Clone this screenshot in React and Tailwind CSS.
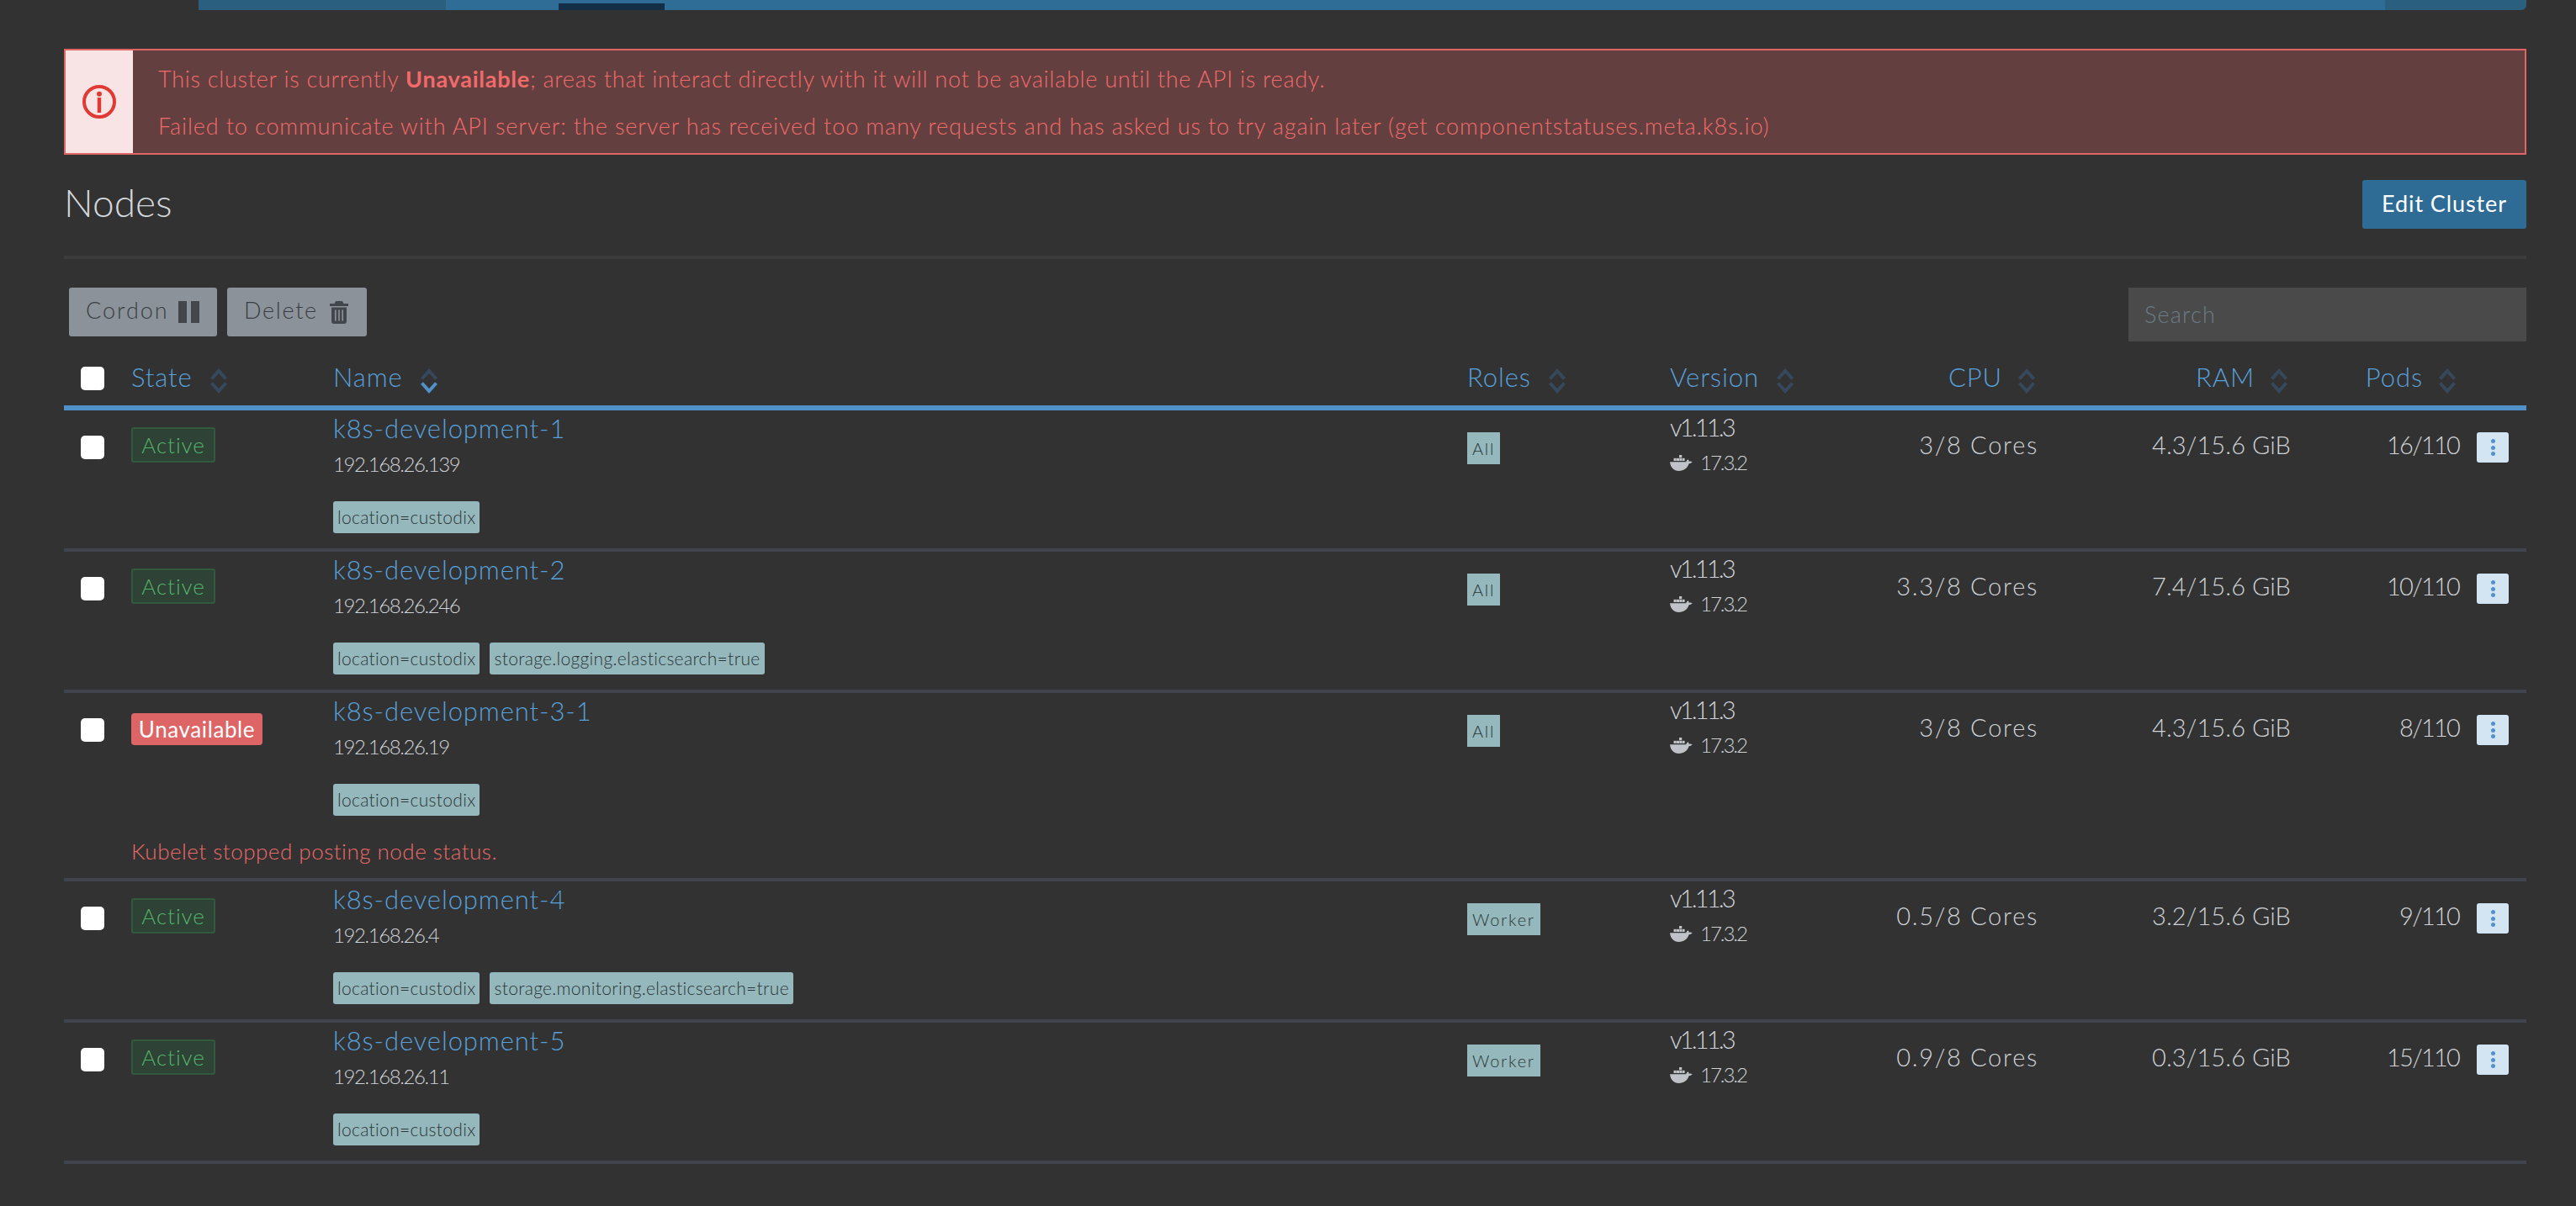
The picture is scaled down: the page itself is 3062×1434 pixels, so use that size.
import React from "react";

const GRID = "grid grid-cols-[80px_240px_1348px_241px_200px_238px_300px_200px_80px]";
const F = "font-['Lato','Open_Sans',sans-serif] font-light";

function Sort({ active }) {
  return (
    <svg width="20" height="30" viewBox="0 0 20 30" fill="none" strokeWidth="4" className="mt-[10px] shrink-0">
      <polyline points="1.5,12.5 10,3 18.5,12.5" stroke="#36495c" />
      <polyline points="1.5,17.5 10,27 18.5,17.5" stroke={active ? "#4f91c8" : "#36495c"} />
    </svg>
  );
}

function Head({ label, active, right }) {
  return (
    <div className={`flex items-center ${right ? "justify-end gap-[19px] pr-[4px]" : "gap-[21px]"}`}>
      <span className="text-[31px] leading-[40px] tracking-[0.9px] text-[#58a0da]">{label}</span>
      <Sort active={active} />
    </div>
  );
}

function Docker() {
  return (
    <svg width="27" height="19" viewBox="0 0 27 19" fill="#bfc3c7" className="shrink-0">
      <rect x="11" y="0" width="3.2" height="3.2" />
      <rect x="4.5" y="3.8" width="3.2" height="3.2" />
      <rect x="8" y="3.8" width="3" height="3.2" />
      <rect x="11.3" y="3.8" width="3" height="3.2" />
      <rect x="14.6" y="3.8" width="3" height="3.2" />
      <path d="M0 8.2h19.2c.4-1.6 1.4-2.6 2.4-3 .6.7 1 1.6 1 2.5 1.4-.5 2.9-.2 4 .6-.9 1.2-2.3 1.9-4 1.9C21 15 16.8 19 10.6 19 4.6 19 .6 14.6 0 8.2z" />
    </svg>
  );
}

function Row({ name, ip, tags, roles, cpu, ram, pods, state, error }) {
  return (
    <div className="border-b-[4px] border-[#3f444d]">
      <div className={`${GRID} h-[164px]`}>
        <div className="pl-[20px] pt-[30px]">
          <input type="checkbox" className="block h-[28px] w-[28px] appearance-none rounded-[5px] bg-white" />
        </div>
        <div>
          {state === "Active" ? (
            <span className="mt-[20px] inline-flex h-[42px] w-[100px] items-center justify-center rounded-[3px] border-2 border-[#30593f] bg-[#2e4235] text-[26px] tracking-[0.9px] text-[#52b56c]">
              Active
            </span>
          ) : (
            <span className="mt-[24px] inline-flex h-[38px] w-[156px] items-center justify-center rounded-[4px] bg-[#de6565] text-[26px] font-normal tracking-[0.6px] text-white">
              Unavailable
            </span>
          )}
        </div>
        <div>
          <div className="mt-[3px] text-[31px] leading-[36px] tracking-[0.9px] text-[#58a0da]">{name}</div>
          <div className="mt-[10px] text-[24px] leading-[30px] tracking-[-1.4px] text-[#cfd3d7]">{ip}</div>
          <div className="mt-[29px] flex gap-[12px]">
            {tags.map((t) => (
              <span key={t} className="flex h-[38px] items-center rounded-[3px] bg-[#95b8bc] px-[5px] text-[21px] tracking-[0.32px] text-[#2c3638]">
                {t}
              </span>
            ))}
          </div>
        </div>
        <div>
          <span className="mt-[26px] inline-flex h-[38px] items-center bg-[#95b8bc] px-[6px] text-[20px] tracking-[1.8px] text-[#2c3638]">{roles}</span>
        </div>
        <div>
          <div className="mt-[2px] text-[29px] leading-[36px] tracking-[-2.8px] text-[#cfd3d7]">v1.11.3</div>
          <div className="mt-[9px] flex items-center gap-[9px] text-[24px] leading-[30px] tracking-[-2px] text-[#cfd3d7]">
            <Docker />
            17.3.2
          </div>
        </div>
        <div className="mt-[21px] text-right text-[29px] leading-[40px] tracking-[1.7px] text-[#cfd3d7]">{cpu}</div>
        <div className="mt-[21px] text-right text-[29px] leading-[40px] tracking-[0.1px] text-[#cfd3d7]">{ram}</div>
        <div className="mt-[21px] text-right text-[29px] leading-[40px] tracking-[-1.8px] text-[#cfd3d7]">{pods}</div>
        <div className="pl-[21px] pt-[26px]">
          <button className="flex h-[36px] w-[38px] flex-col items-center justify-center gap-[2.5px] rounded-[3px] bg-[#d3e5f3]">
            <i className="h-[5px] w-[5px] rounded-full bg-[#4f91c8]" />
            <i className="h-[5px] w-[5px] rounded-full bg-[#4f91c8]" />
            <i className="h-[5px] w-[5px] rounded-full bg-[#4f91c8]" />
          </button>
        </div>
      </div>
      {error && <div className="h-[56px] pl-[80px] text-[26px] leading-[48px] tracking-[0.5px] text-[#ee6a6a]">{error}</div>}
    </div>
  );
}

export default function App() {
  const loc = "location=custodix";
  return (
    <div className={`h-[1434px] w-[3062px] overflow-hidden bg-[#323232] ${F}`}>
      <div className="ml-[236px] mr-[59px] flex h-[12px]">
        <div className="w-[294px] bg-[#2a5f80]" />
        <div className="flex-1 bg-[#2f6d97] pl-[134px] pt-[4px]">
          <div className="h-[8px] w-[126px] bg-[#132f45]" />
        </div>
        <div className="w-[168px] rounded-br-[6px] bg-[#2a5f80]" />
      </div>

      <div className="pl-[76px] pr-[59px]">
        <div className="mt-[46px] flex h-[126px] border-2 border-[#e06666] bg-[#643f3f]">
          <div className="flex w-[80px] items-center justify-center bg-[#f8e4e4]">
            <svg width="40" height="40" viewBox="0 0 40 40" fill="#e03a34">
              <circle cx="20" cy="20" r="18" fill="none" stroke="#e03a34" strokeWidth="4" />
              <circle cx="20" cy="10.8" r="3" />
              <rect x="17.8" y="15" width="4.4" height="18" />
            </svg>
          </div>
          <div className="pl-[30px] pt-[14px] text-[27px] leading-[40px] text-[#f26b6b]">
            <p className="tracking-[0.75px]">
              This cluster is currently <b className="font-bold">Unavailable</b>; areas that interact directly with it will not be available until the API is ready.
            </p>
            <p className="mt-[16px] tracking-[0.89px]">
              Failed to communicate with API server: the server has received too many requests and has asked us to try again later (get componentstatuses.meta.k8s.io)
            </p>
          </div>
        </div>

        <div className="flex h-[120px] items-start justify-between pt-[30px]">
          <h1 className="text-[46px] leading-[54px] text-[#d3d7db]">Nodes</h1>
          <button className="h-[58px] w-[195px] rounded-[3px] bg-[#2e6c95] pb-[2px] text-[27px] font-normal tracking-[0.9px] text-white">Edit Cluster</button>
        </div>
        <div className="h-[4px] bg-[#3c3c3c]" />

        <div className="mt-[34px] flex h-[64px] items-start justify-between">
          <div className="ml-[6px] flex gap-[12px]">
            <button className="flex h-[58px] w-[176px] items-center justify-between rounded-[3px] bg-[#8b9299] px-[20px] pb-[4px] text-[27px] tracking-[2px] text-[#3a3e42]">
              Cordon
              <svg width="26" height="26" viewBox="0 0 26 26" fill="#43474b" className="mt-[4px] shrink-0">
                <rect x="0" width="10" height="26" />
                <rect x="15" width="10" height="26" />
              </svg>
            </button>
            <button className="flex h-[58px] w-[166px] items-center justify-between rounded-[3px] bg-[#8b9299] px-[20px] pb-[4px] text-[27px] tracking-[1.7px] text-[#3a3e42]">
              Delete
              <svg width="22" height="27" viewBox="0 0 22 27" fill="#43474b" className="mr-[2px] mt-[4px] shrink-0">
                <path d="M7 0h8l1.5 3H22v3H0V3h5.5z" />
                <path fillRule="evenodd" d="M2 7.5h18V24a3 3 0 0 1-3 3H5a3 3 0 0 1-3-3zM6 10.5v13h1.6v-13zM10.2 10.5v13h1.6v-13zM14.4 10.5v13H16v-13z" />
              </svg>
            </button>
          </div>
          <input
            placeholder="Search"
            className="h-[64px] w-[473px] bg-[#4a4a4a] pb-[2px] pl-[19px] text-[27px] tracking-[1.2px] outline-none placeholder:text-[#6a7c85]"
          />
        </div>

        <div className={`${GRID} h-[82px] border-b-[6px] border-[#4f91c8] pt-[8px]`}>
          <div className="flex items-center pl-[20px]">
            <input type="checkbox" className="mt-[4px] block h-[28px] w-[28px] appearance-none rounded-[5px] bg-white" />
          </div>
          <Head label="State" />
          <Head label="Name" active />
          <Head label="Roles" />
          <Head label="Version" />
          <Head label="CPU" right />
          <Head label="RAM" right />
          <Head label="Pods" right />
          <div />
        </div>

        <Row name="k8s-development-1" ip="192.168.26.139" tags={[loc]} roles="All" cpu="3/8 Cores" ram="4.3/15.6 GiB" pods="16/110" state="Active" />
        <Row name="k8s-development-2" ip="192.168.26.246" tags={[loc, "storage.logging.elasticsearch=true"]} roles="All" cpu="3.3/8 Cores" ram="7.4/15.6 GiB" pods="10/110" state="Active" />
        <Row name="k8s-development-3-1" ip="192.168.26.19" tags={[loc]} roles="All" cpu="3/8 Cores" ram="4.3/15.6 GiB" pods="8/110" state="Unavailable" error="Kubelet stopped posting node status." />
        <Row name="k8s-development-4" ip="192.168.26.4" tags={[loc, "storage.monitoring.elasticsearch=true"]} roles="Worker" cpu="0.5/8 Cores" ram="3.2/15.6 GiB" pods="9/110" state="Active" />
        <Row name="k8s-development-5" ip="192.168.26.11" tags={[loc]} roles="Worker" cpu="0.9/8 Cores" ram="0.3/15.6 GiB" pods="15/110" state="Active" />
      </div>
    </div>
  );
}
